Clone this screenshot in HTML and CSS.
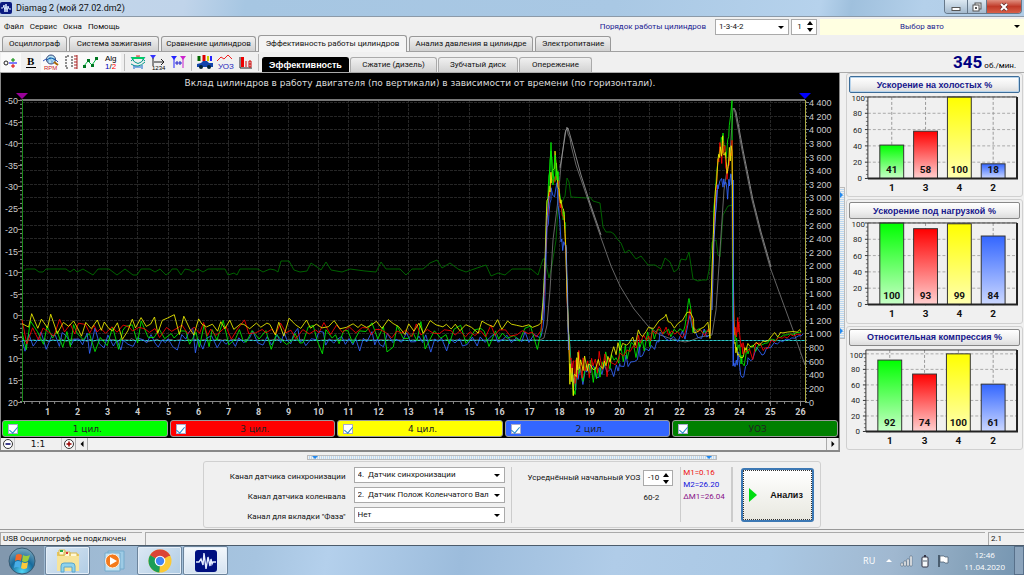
FILE: index.html
```html
<!DOCTYPE html>
<html lang="ru">
<head>
<meta charset="utf-8">
<title>Diamag 2 (мой 27.02.dm2)</title>
<link rel="stylesheet" href="styles.css">
</head>
<body>
<header class="titlebar">
  <svg class="app-icon" viewBox="0 0 12 12"><rect width="12" height="12" rx="2" fill="#0a1a80"/><path d="M1 6h2l1-3 1 7 1-8 1 8 1-6 1 3h2" fill="none" stroke="#d8e8ff"/></svg>
  <span class="title">Diamag 2 (мой 27.02.dm2)</span>
  <div class="win-buttons">
    <button class="win-btn" aria-label="Свернуть"><svg viewBox="0 0 12 10"><rect x="2" y="5.500" width="8" height="3" fill="#fff" stroke="#555"/></svg></button>
    <button class="win-btn" aria-label="Развернуть"><svg viewBox="0 0 12 10"><rect x="4" y="1" width="6" height="6" fill="#eee" stroke="#555"/><rect x="2" y="3" width="6" height="6" fill="#fff" stroke="#555"/><rect x="4" y="5" width="2" height="2" fill="#555"/></svg></button>
    <button class="win-btn close" aria-label="Закрыть"><svg viewBox="0 0 12 10"><path d="M3 2l6 6M9 2l-6 6" stroke="#643030" stroke-width="3.500"/><path d="M3 2l6 6M9 2l-6 6" stroke="#fff" stroke-width="2"/></svg></button>
  </div>
</header>

<div class="menubar">
  <nav class="menu"><a href="#">Файл</a><a href="#">Сервис</a><a href="#">Окна</a><a href="#">Помощь</a></nav>
  <label class="order-label" for="order">Порядок работы цилиндров</label>
  <span class="select order"><select id="order"><option>1-3-4-2</option></select></span>
  <span class="spin small"><input type="text" value="1" aria-label="Номер цилиндра"><span class="arrows"><button aria-label="Больше"></button><button class="down" aria-label="Меньше"></button></span></span>
  <button class="car">Выбор авто<i class="caret"></i></button>
</div>

<nav class="tabs">
  <button class="tab t1">Осциллограф</button><button class="tab t2">Система зажигания</button><button class="tab t3">Сравнение цилиндров</button><button class="tab t4 active">Эффективность работы цилиндров</button><button class="tab t5">Анализ давления в цилиндре</button><button class="tab t6">Электропитание</button>
</nav>

<div class="toolbar">
  <div class="tools">
    <button class="tool on" aria-label="Смещение"><svg viewBox="0 0 20 18"><circle cx="5" cy="10" r="2" fill="none" stroke="#222"/><path d="M8 10h8" stroke="#00f"/><path d="M12 5v4M10 7h4" stroke="#080"/><path d="M10 13h4M12 11v4" stroke="#d00"/></svg></button>
    <button class="tool" aria-label="Жирные линии"><svg viewBox="0 0 20 18"><text x="6" y="12" class="bold-glyph">B</text><path d="M5 14.500h10" stroke="#000"/></svg></button>
    <button class="tool on" aria-label="Обороты"><svg viewBox="0 0 20 18"><path d="M2 8l3-2 2 3 2-5 2 6 2-5 4 4" fill="none" stroke="#35b"/><circle cx="10" cy="6.500" r="4.500" fill="#9cdaf0" fill-opacity=".7" stroke="#347"/><path d="M6 7q4-4 8 0" fill="none" stroke="#05a"/><path d="M13 9l4 3" stroke="#a60" stroke-width="2"/><text x="3" y="17" class="nano red">RPM</text></svg></button>
    <button class="tool on" aria-label="Шкала"><svg viewBox="0 0 20 18"><path d="M8 3H5v12h3M11 3v12" fill="none" stroke="#222" stroke-dasharray="2 1"/><path d="M16 2v14M13 3h3M13 6h3M13 9h3M13 12h3M13 15h3" stroke="#a22"/></svg></button>
    <button class="tool on" aria-label="Точки"><svg viewBox="0 0 20 18"><path d="M3 13l4-5 4 4 5-7" fill="none" stroke="#0b4"/><path d="M2 12h3v3H2zM6 6h3v3H6zM10 11h3v3h-3zM14 4h3v3h-3z" fill="#072"/></svg></button>
    <button class="tool on" aria-label="Алгоритм"><svg viewBox="0 0 20 18"><text x="4" y="8" class="micro">Alg</text><text x="4" y="16" class="micro"><tspan fill="#00b">1</tspan>/<tspan fill="#f00">2</tspan></text></svg></button>
    <i class="sep"></i>
    <button class="tool" aria-label="Фаза"><svg viewBox="0 0 20 18"><path d="M3 4q7 13 14 0M3 8q7-8 14 0M3 11q7 5 14-2" fill="none" stroke="#098"/><path d="M4 5h12" stroke="#0c6" stroke-width="2"/><path d="M6 12v4M14 12v4M7 14h6" stroke="#16c"/><path d="M8 3h4" stroke="#e22"/></svg></button>
    <button class="tool" aria-label="Порядок"><svg viewBox="0 0 20 18"><path d="M2 2h6l-3 4z" fill="#33f"/><path d="M5 5v8M6 9h10M13 6l3 3-3 3" fill="none" stroke="#222"/><text x="4" y="17" class="nano">1234</text></svg></button>
    <button class="tool" aria-label="Маркеры"><svg viewBox="0 0 20 18"><path d="M3 3h6L6 7z" fill="#22f"/><path d="M12 3h6l-3 4z" fill="#c2c"/><path d="M6 6v9" stroke="#22f"/><path d="M15 6v9" stroke="#c2c"/><path d="M7 10h7M9 8v4M12 8v4" stroke="#22c"/></svg></button>
    <i class="sep"></i>
    <button class="tool" aria-label="Авто"><svg viewBox="0 0 20 18"><path d="M4 3v5" stroke="#060" stroke-width="3"/><path d="M9 2v6" stroke="#d00" stroke-width="3"/><path d="M13 3v5" stroke="#cc0" stroke-width="2"/><path d="M16 3v5" stroke="#22f" stroke-width="2"/><path d="M2 11l4-1 2-2h4l2 2h4v4H2z" fill="#14a"/><circle cx="6" cy="14" r="2" fill="#023"/><circle cx="14" cy="14" r="2" fill="#023"/></svg></button>
    <button class="tool" aria-label="УОЗ"><svg viewBox="0 0 20 18"><path d="M2 8l4-4 3 2 4-4 4 4" fill="none" stroke="#e22"/><text x="3" y="16" class="micro blue">УОЗ</text></svg></button>
    <button class="tool" aria-label="Компрессия"><svg viewBox="0 0 20 18"><path d="M5 4v11h12" fill="none" stroke="#222"/><path d="M7.500 4v10" stroke="#e00" stroke-width="3"/><path d="M11 8v6M14 8h2v6h-2zM14 11h2" fill="none" stroke="#c00"/></svg></button>
    <i class="sep"></i>
  </div>
  <nav class="subtabs">
    <button class="sub active s1">Эффективность</button><button class="sub s1">Сжатие (дизель)</button><button class="sub s2">Зубчатый диск</button><button class="sub s3">Опережение</button>
  </nav>
  <div class="rpm"><b>345</b><span>об./мин.</span></div>
</div>

<main class="main">
  <section class="scope">
    <div class="screen">
      <h1 class="chart-title">Вклад цилиндров в работу двигателя (по вертикали) в зависимости от времени (по горизонтали).</h1>
      <svg id="scope" class="plot" viewBox="1 92 838 327"></svg>
      <div class="legend">
        <label class="leg green"><input type="checkbox" checked><span>1 цил.</span></label>
        <label class="leg red-bg"><input type="checkbox" checked><span>3 цил.</span></label>
        <label class="leg yellow"><input type="checkbox" checked><span>4 цил.</span></label>
        <label class="leg blue-bg"><input type="checkbox" checked><span>2 цил.</span></label>
        <label class="leg dark"><input type="checkbox" checked><span>УОЗ</span></label>
      </div>
    </div>
    <div class="scale">
      <button class="zoom" aria-label="Уменьшить"><svg viewBox="0 0 12 12"><circle cx="6" cy="6" r="4.500" fill="#fff" stroke="#333"/><path d="M3.500 6h5" stroke="#006" stroke-width="1.500"/></svg></button>
      <span class="ratio">1:1</span>
      <button class="zoom" aria-label="Увеличить"><svg viewBox="0 0 12 12"><circle cx="6" cy="6" r="4.500" fill="#fff" stroke="#333"/><path d="M3.500 6h5M6 3.500v5" stroke="#900" stroke-width="1.500"/></svg></button>
      <button class="zoom edge" aria-label="Влево"><svg viewBox="0 0 12 12"><path d="M7.500 3v6l-3-3z"/></svg></button>
      <i class="track"></i>
      <button class="zoom edge" aria-label="Вправо"><svg viewBox="0 0 12 12"><path d="M4.500 3v6l3-3z"/></svg></button>
    </div>
  </section>
  <div class="vsplit"><div class="grip"><i></i><i></i></div></div>
  <aside class="side">
    <section class="card"><button class="card-title focus">Ускорение на холостых %</button><svg class="bars" viewBox="0 0 172 102" data-values="41,58,100,18" data-start="44" data-max="100"></svg></section>
    <section class="card"><button class="card-title">Ускорение под нагрузкой %</button><svg class="bars" viewBox="0 0 172 102" data-values="100,93,99,84" data-start="44" data-max="100"></svg></section>
    <section class="card"><button class="card-title">Относительная компрессия %</button><svg class="bars" viewBox="0 0 172 102" data-values="92,74,100,61" data-start="42" data-max="105"></svg></section>
  </aside>
</main>

<div class="hsplit"><div class="hgrip"><i></i><i></i></div></div>
<section class="bottom">
  <form class="panel">
    <div class="channels">
      <label for="c1">Канал датчика синхронизации</label><span class="select"><select id="c1"><option>4.&nbsp; Датчик синхронизации</option></select></span>
      <label for="c2">Канал датчика коленвала</label><span class="select"><select id="c2"><option>2.&nbsp; Датчик Полож Коленчатого Вал</option></select></span>
      <label for="c3">Канал для вкладки "Фаза"</label><span class="select"><select id="c3"><option>Нет</option></select></span>
    </div>
    <div class="advance">
      <label for="uoz">Усреднённый начальный УОЗ</label>
      <span class="spin"><input id="uoz" type="text" value="-10"><span class="arrows"><button type="button" aria-label="Больше"></button><button type="button" class="down" aria-label="Меньше"></button></span></span>
      <span class="disk">60-2</span>
    </div>
    <div class="markers"><span class="m-red">M1=0.16</span><span class="m-blue">M2=26.20</span><span class="m-purple">ΔM1=26.04</span></div>
    <button type="button" class="analyze"><svg viewBox="0 0 8 14"><path d="M0 0v14l8-7z" fill="#0d1"/></svg><span>Анализ</span></button>
  </form>
</section>

<footer class="status"><span class="usb">USB Осциллограф не подключен</span><span class="fill"></span><span class="ver">2.1</span></footer>

<div class="taskbar">
  <button class="start" aria-label="Пуск"><svg viewBox="0 0 28 28"><defs><radialGradient id="orb" cx=".5" cy=".9" r=".9"><stop offset="0" stop-color="#4fd5f5"/><stop offset=".5" stop-color="#176a9c"/><stop offset="1" stop-color="#7eaabf"/></radialGradient></defs><circle cx="14" cy="14" r="13" fill="url(#orb)" stroke="#375a72"/><path d="M8 8q3-2 6 0l-1 6q-3-2-6 0z" fill="#f06a28"/><path d="M15 8q3 2 7 0l-2 6q-3 2-6 0z" fill="#9ccc3c"/><path d="M7 15q3-2 6 0l-1 6q-3-2-6 0z" fill="#48aee8"/><path d="M14 15q3 2 6 0l-1 6q-3 2-6 0z" fill="#fcc93a"/></svg></button>
  <button class="task open" aria-label="Проводник"><svg viewBox="0 0 28 26"><path d="M3 4h6l2 2h14v17H3z" fill="#e9c65c"/><path d="M5 2h6v5H5zM10 4h6v5h-6zM16 5h7v4h-7z" fill="#fff8d8" stroke="#d8b850"/><path d="M6 3h3" stroke="#2a4" stroke-width="2"/><path d="M12 5h2" stroke="#d33" stroke-width="2"/><path d="M3 8h22v15H3z" fill="#f7e49a"/><path d="M7 24v-6q0-3 3-3h8q3 0 3 3v6h-3v-5h-8v5z" fill="#8fd3ee" stroke="#5aa6cc"/></svg></button>
  <button class="task" aria-label="Проигрыватель"><svg viewBox="0 0 28 26"><path d="M8 3h16v18H8z" fill="#9dcbe5" stroke="#74aacb"/><path d="M5 5h15v18H5z" fill="#c2e2f2" stroke="#74aacb"/><circle cx="12.500" cy="13" r="7" fill="#f47a1c" stroke="#fff0e0"/><path d="M10 9v8l7-4z" fill="#fff"/></svg></button>
  <button class="task open" aria-label="Chrome"><svg viewBox="0 0 28 26"><circle cx="14" cy="13" r="11.500" fill="#fcc934"/><path d="M14 13L4 7.300A11.500 11.500 0 0 1 24 7.300z" fill="#db4437"/><path d="M14 7.500h10.100" stroke="#db4437" stroke-width="1"/><path d="M14 13L4 7.300A11.500 11.500 0 0 0 13.500 24.500z" fill="#1b9e57"/><path d="M9 16l-5-8.700 4.500 3z" fill="#1b9e57"/><path d="M18.500 16l-5 8.500 1-7z" fill="#fcc934"/><circle cx="14" cy="13" r="5.300" fill="#fff"/><circle cx="14" cy="13" r="4.200" fill="#4285f4"/></svg></button>
  <button class="task open current" aria-label="Diamag"><svg viewBox="0 0 28 26"><rect x="3" y="2" width="22" height="22" rx="3" fill="#001080"/><path d="M4 14h3l2-3 2 6 1-12 2 16 2-12 2 9 1-7 1 5 1-2h3" fill="none" stroke="#e4edff" stroke-width="1.400"/></svg></button>
  <div class="tray">
    <span class="lang">RU</span>
    <svg class="ti" viewBox="0 0 14 14"><path d="M4 8h6L7 5z" fill="#fff"/></svg>
    <svg class="ti" viewBox="0 0 14 14"><path d="M1 12h2V9H1zM4 12h2V7H4zM7 12h2V5H7zM10 12h2V2h-2z" fill="#fff" stroke="#456" stroke-width=".5"/></svg>
    <svg class="ti" viewBox="0 0 14 14"><rect x="4" y="3" width="6" height="10" rx="1" fill="#f4f8fa" stroke="#334"/><path d="M6 1h2v2H6z" fill="#334"/><path d="M5 7h4" stroke="#567"/></svg>
    <svg class="ti" viewBox="0 0 14 14"><path d="M3 1v12" stroke="#345" stroke-width="1.500"/><path d="M4 2h4l1 1h3v6H9L8 8H4z" fill="#fff" stroke="#456" stroke-width=".7"/></svg>
    <div class="clock"><span>12:46</span><span>11.04.2020</span></div>
  </div>
  <button class="desktop" aria-label="Рабочий стол"></button>
</div>
<script src="charts.js"></script>
</body>
</html>
```

FILE: styles.css
```css
* { box-sizing: border-box; }
body { margin: 0; min-height: 100vh; display: flex; flex-direction: column; background: #f0f0f0; color: #111; font: 8px/12px Roboto, "Liberation Sans", sans-serif; overflow: hidden; }
button, input, select { font: inherit; color: inherit; margin: 0; padding: 0; border: 0; background: none; min-width: 0; }
a { color: inherit; text-decoration: none; }
svg { display: block; flex: none; }

.titlebar { height: 17px; display: flex; align-items: center; gap: 4px; border-bottom: 1px solid #8c9aa8; background: linear-gradient(100deg, #c4d6ea 0, #c0d4ea 18%, #a6c6e2 24%, #a9c8e4 60%, #b6d2ec 80%, #9fc0dd 83%, #b4d0ea 90%, #b0cce6 100%); }
.app-icon { width: 12px; height: 12px; }
.title { flex: 1; font-size: 9px; }
.win-buttons { display: flex; align-self: flex-start; height: 14px; margin-right: 2px; border: 1px solid #66788a; border-top: 0; border-radius: 0 0 4px 4px; overflow: hidden; }
.win-btn { width: 19px; display: flex; align-items: center; justify-content: center; border-right: 1px solid #66788a; background: linear-gradient(#dce8f2, #a4bace); }
.win-btn:nth-child(1) { width: 23px; }
.win-btn svg { width: 12px; height: 10px; }
.win-btn.close { width: 34px; border: 0; background: linear-gradient(#e09080, #c03a28 50%, #d86048); }

.menubar { height: 19px; display: flex; align-items: center; padding-left: 4px; }
.menu { display: flex; gap: 6px; flex: 1; }
.order-label { color: #1a1a90; margin-right: 9px; }
.select { position: relative; display: block; height: 16px; border: 1px solid #aaa; background: #fff; }
.select select { appearance: none; display: block; width: 100%; height: 14px; padding: 0 12px 0 3px; outline: 0; }
.select::after, .caret { content: ""; position: absolute; right: 4px; top: 6px; border: 3px solid transparent; border-top-color: #000; border-bottom: 0; pointer-events: none; }
.order { width: 74px; margin-right: 2px; }
.spin { display: flex; width: 30px; height: 16px; padding-right: 3px; align-items: center; border: 1px solid #aaa; background: #fff; }
.spin input { flex: 1; width: 10px; text-align: center; outline: 0; }
.spin.small { width: 26px; margin-right: 3px; }
.arrows { display: flex; flex-direction: column; gap: 3px; }
.arrows button { width: 0; height: 0; border: 3px solid transparent; border-top: 0; border-bottom: 4px solid #000; }
.arrows button.down { border-bottom: 0; border-top: 4px solid #000; }
.car { position: relative; width: 20%; height: 16px; background: #ffffe1; color: #1a1a90; }

.tabs { display: flex; align-items: flex-end; gap: 2px; height: 16px; padding-left: 2px; border-bottom: 1px solid #a0a0a0; }
.tab { height: 15px; border: 1px solid #999; border-bottom: 0; border-radius: 3px 3px 0 0; background: linear-gradient(#f2f2f2, #d0d0d0); white-space: nowrap; }
.t1 { width: 65px; } .t2 { width: 90px; } .t3 { width: 95px; } .t4 { width: 149px; } .t5 { width: 124px; } .t6 { width: 76px; }
.tab.active { height: 17px; margin-bottom: -1px; background: #f4f4f4; }

.toolbar { height: 21px; display: flex; align-items: flex-end; border-bottom: 1px solid #aaa; }
.tools { display: flex; align-items: center; height: 20px; padding-left: 1px; }
.tool { width: 20px; height: 19px; }
.tool.on { background: #fafafa; }
.tool svg { width: 20px; height: 18px; }
.sep { width: 1px; height: 17px; margin: 0 3px; background: #bbb; }
.bold-glyph { font: bold 11px "Liberation Serif", serif; }
.micro { font: 8px "Liberation Sans", sans-serif; }
.nano { font: 6px "Liberation Sans", sans-serif; }
.red { fill: #c22; } .blue { fill: #22b; }
.subtabs { display: flex; flex: 1; gap: 1px; }
.sub { height: 15px; border: 1px solid #aaa; border-bottom: 0; border-radius: 3px 3px 0 0; background: linear-gradient(#f0f0f0, #d2d2d2); }
.s1 { width: 87px; } .s2 { width: 80px; } .s3 { width: 73px; }
.sub.active { background: #000; color: #fff; border-color: #000; font-family: "Liberation Sans", sans-serif; font-size: 9px; font-weight: bold; }
.rpm { display: flex; align-items: baseline; gap: 2px; padding-right: 8px; color: #000; }
.rpm b { color: #000080; font-size: 17px; line-height: 19px; }

.main { display: flex; align-items: flex-start; padding: 0 1px 0 0; }
.scope { flex: 1; min-width: 0; border: 1px solid #888; border-top: 0; }
.screen { background: #000; }
.chart-title { margin: 0; height: 19px; padding-top: 4px; color: #ddd; font: 9px/12px "DejaVu Sans", sans-serif; text-align: center; white-space: nowrap; }
.plot { width: 100%; height: auto; }
.plot .grid { stroke: #262626; stroke-dasharray: 3 1; }
.plot .axis { stroke: #888; }
.plot text { fill: #ccc; font: 9px "Liberation Sans", sans-serif; }
.plot .time { font-family: Roboto, sans-serif; font-weight: bold; text-anchor: middle; }
.plot .left { text-anchor: end; }
.trace { fill: none; stroke-width: 1; stroke-linejoin: round; opacity: .85; }
.legend { display: flex; gap: 2px; padding: 1px; }
.leg { flex: 1; height: 17px; display: flex; align-items: center; padding-left: 5px; border: 1px solid #999; border-radius: 3px; font-family: "DejaVu Sans", sans-serif; font-size: 9px; color: #222; }
.leg span { flex: 1; text-align: center; padding-right: 10px; }
.leg input { appearance: none; width: 10px; height: 10px; margin: 0; background: #fff; border: 1px solid #aac; display: grid; place-items: center; }
.leg input::after { content: ""; width: 4px; height: 7px; border: solid #28c; border-width: 0 1px 1px 0; transform: rotate(40deg); }
.green { background: #00ff00; } .red-bg { background: #ff0000; } .yellow { background: #ffff00; } .blue-bg { background: #3366ff; } .dark { background: #008000; }
.scale { display: flex; height: 13px; align-items: stretch; border-bottom: 1px solid #888; }
.zoom { width: 13px; display: flex; justify-content: center; }
.zoom svg { width: 12px; height: 12px; }
.zoom.edge { border: 1px solid #aaa; border-width: 0 1px; }
.ratio { width: 48px; text-align: center; border: 1px solid #ccc; border-width: 0 1px; font-family: "DejaVu Sans", sans-serif; font-size: 9px; }
.track { flex: 1; background: #f2f2f2; }
.vsplit { width: 6px; align-self: stretch; display: flex; align-items: center; }
.grip { width: 5px; height: 152px; display: flex; flex-direction: column; justify-content: space-between; padding: 4px 0; border: 1px solid #bbb; border-left: 0; background: repeating-linear-gradient(#f0f0f0 0 1px, #bcd8f0 1px 2px); }
.grip i { border: 3px solid transparent; border-left: 3px solid #28e; border-right: 0; width: 0; }
.side { width: 177px; display: flex; flex-direction: column; gap: 2px; }
.card { border: 1px solid #d0d0d0; border-radius: 3px; padding: 2px; }
.card-title { display: block; width: 100%; height: 17px; border: 1px solid #888; border-radius: 2px; background: linear-gradient(#fff, #eee 60%, #ddd); color: #16168c; font-family: "Liberation Sans", sans-serif; font-size: 9px; font-weight: bold; }
.card-title.focus { border-color: #3c6c98; box-shadow: inset 0 0 0 1px #b8d4ec; }
.bars { width: 100%; height: auto; overflow: visible; }
.bars text { font: 9px Roboto, sans-serif; fill: #222; }
.bars .strong { font-weight: bold; font-size: 10px; text-anchor: middle; fill: #111; }
.bars .scale-num { text-anchor: end; font-size: 8px; }

.hsplit { padding: 3px 0 0; display: flex; justify-content: center; }
.hgrip { width: 40%; height: 5px; display: flex; justify-content: space-between; padding: 0 4px; border: 1px solid #bbb; background: repeating-linear-gradient(90deg, #f0f0f0 0 1px, #bcd8f0 1px 2px); }
.hgrip i { height: 0; border: 3px solid transparent; border-top-color: #28e; border-bottom: 0; }
.bottom { flex: 1; display: flex; justify-content: center; align-items: flex-start; padding-top: 1px; border-bottom: 1px solid #999; }
.panel { display: flex; align-items: center; height: 67px; padding: 0 6px 0 26px; border: 1px solid #d0d0d0; border-radius: 3px; }
.channels { display: grid; grid-template-columns: auto 151px; gap: 4px 8px; align-items: center; padding-right: 6px; border-right: 1px solid #ccc; }
.channels label { text-align: right; padding-top: 4px; }
.advance { display: grid; grid-template-columns: auto auto; gap: 6px 3px; align-items: center; align-self: flex-start; margin-top: 8px; padding: 0 7px 0 16px; }
.disk { grid-column: 1 / 3; justify-self: end; margin-right: 14px; }
.markers { display: flex; flex-direction: column; align-self: flex-start; width: 53px; height: 55px; margin: 5px 8px 0 0; padding-left: 2px; border: 1px solid #ccc; border-width: 0 2px 0 1px; white-space: nowrap; }
.m-red { color: #e11; } .m-blue { color: #11d; } .m-purple { color: #818; }
.analyze { width: 73px; height: 54px; display: flex; align-items: center; gap: 13px; padding-left: 6px; border: 2px solid #3c78b4; border-radius: 3px; outline: 1px dotted #333; outline-offset: -3px; background: linear-gradient(#fff, #e8e8e0); font-family: "Liberation Sans", sans-serif; font-size: 9px; font-weight: bold; }
.analyze svg { width: 8px; height: 14px; }

.status { display: flex; gap: 3px; height: 15px; padding-top: 2px; background: #f0f0f0; }
.status span { border: 1px solid #aaa; border-width: 1px 0 0 1px; padding-left: 2px; line-height: 11px; white-space: nowrap; }
.usb { width: 142px; } .fill { flex: 1; } .ver { width: 36px; }
.taskbar { display: flex; height: 30px; border-top: 1px solid #4c5c6c; background: linear-gradient(100deg, #9ab4cc, #a6c4e0 25%, #b4d0ec 32%, #9cbcdc 45%, #b0cce8 60%, #aac8e4 75%, #a0b8d0 87%, #88a4bc 94%, #7494b0); }
.start { width: 44px; display: flex; justify-content: center; align-items: center; background: #8298ae; }
.start svg { width: 28px; height: 28px; }
.task { width: 45px; margin-left: 1px; display: flex; align-items: center; justify-content: center; border: 1px solid transparent; border-radius: 2px; }
.task.open { border-color: #6c849c; background: linear-gradient(135deg, #dce8f4, #b0cce4); box-shadow: inset 0 0 0 1px #e4eef8; }
.task.current { background: linear-gradient(#f4f8fc, #d4e2f0); }
.task svg { width: 28px; height: 26px; }
.tray { flex: 1; display: flex; align-items: center; justify-content: flex-end; gap: 4px; color: #fff; font-family: "Open Sans", "Noto Sans", sans-serif; }
.lang { margin-right: 3px; font-size: 9px; }
.ti { width: 14px; height: 14px; }
.clock { display: flex; flex-direction: column; align-items: center; margin: 0 9px 0 10px; }
.desktop { width: 10px; border: 1px solid #58708a; background: #8ca4bc; }
```

FILE: charts.js
```js
const NS = 'http://www.w3.org/2000/svg';
function add(parent, name, attrs, text) {
  const el = document.createElementNS(NS, name);
  for (const key in attrs) el.setAttribute(key, attrs[key]);
  if (text !== undefined) el.textContent = text;
  parent.appendChild(el);
  return el;
}
function random(seed) {
  return () => (seed = (seed * 16807) % 2147483647) / 2147483647;
}

const scope = document.getElementById('scope');
const LEFT = 22, RIGHT = 805, TOP = 100, BOTTOM = 402;
const timeX = t => 17 + 30.1 * t;
const valueY = v => 315.4 + 4.307 * v;
const rpmY = r => 401.5 - r * 0.06805;
const line = (x1, y1, x2, y2, cls) => add(scope, 'line', { x1, y1, x2, y2, class: cls });

for (let t = 1; t <= 26; t++) {
  const x = Math.round(timeX(t)) + 0.5;
  line(x, TOP, x, BOTTOM, 'grid');
  line(x, BOTTOM, x, BOTTOM + 4, 'axis');
  add(scope, 'text', { x, y: 415, class: 'time' }, t);
}
for (let t = 0.25; t < 26; t += 0.25) line(timeX(t), BOTTOM, timeX(t), BOTTOM + 2, 'axis');
for (let r = 0; r <= 4400; r += 200) {
  const y = Math.round(rpmY(r)) + 0.5;
  if (r) line(LEFT, y, RIGHT, y, 'grid');
  line(RIGHT, y, RIGHT + 4, y, 'axis');
  const label = r < 1000 ? String(r) : Math.floor(r / 1000) + ' ' + String(r % 1000).padStart(3, '0');
  add(scope, 'text', { x: 809, y: y + 3 }, label);
}
for (let r = 0; r <= 4400; r += 50) line(RIGHT, rpmY(r), RIGHT + 2, rpmY(r), 'axis');
for (let v = -50; v <= 20; v += 5) {
  const y = Math.round(valueY(v)) + 0.5;
  line(LEFT - 4, y, LEFT, y, 'axis');
  add(scope, 'text', { x: 18, y: y + 3, class: 'left' }, v);
}
for (let v = -50; v <= 20; v++) line(LEFT - 2, valueY(v), LEFT, valueY(v), 'axis');
add(scope, 'line', { x1: LEFT, y1: 100, x2: RIGHT, y2: 100, stroke: '#777', 'stroke-width': 2 });
line(LEFT, 401.5, RIGHT, 401.5, 'axis');
add(scope, 'line', { x1: 22.5, y1: TOP, x2: 22.5, y2: BOTTOM, stroke: '#1a8a1a' });
add(scope, 'line', { x1: 805.5, y1: TOP, x2: 805.5, y2: BOTTOM, stroke: '#aaaa44' });
add(scope, 'path', { d: 'M16 93h12l-6 6z', fill: '#909' });
add(scope, 'path', { d: 'M799 93h12l-6 6z', fill: '#00f' });

function trace(points, color) {
  add(scope, 'polyline', { class: 'trace', stroke: color, points: points.map(p => p.map(n => n.toFixed(1)).join(',')).join(' ') });
}
function pairs(text) {
  return text.trim().split(/\s+/).map(p => p.split(',').map(Number));
}
/* Each key is x, y, noise amplitude, step; values between keys are interpolated. */
function noisy(keys, seed) {
  const rnd = random(seed), out = [];
  let side = 1;
  for (let i = 0; i < keys.length - 1; i++) {
    const [x0, y0, a0, step] = keys[i], [x1, y1, a1] = keys[i + 1];
    for (let x = x0; x < x1; x += step * (0.6 + 0.8 * rnd())) {
      const k = (x - x0) / (x1 - x0);
      const amp = a0 + (a1 - a0) * k;
      if (rnd() < 0.8) side = -side;
      out.push([x, Math.min(401, y0 + (y1 - y0) * k + side * amp * (0.1 + 0.9 * rnd() * rnd() * 1.4))]);
    }
  }
  return out;
}

trace(pairs(`22,272 26,269 35,269 39,272 43,272 46,269 66,269 70,272 74,269 77,272 83,269 93,275 98,269 109,269 117,275
 125,269 133,275 137,275 141,269 150,269 155,272 160,269 166,275 170,272 172,269 177,269 181,275 185,269 190,270 193,272
 198,269 203,272 208,269 225,269 228,275 234,273 237,275 240,269 258,269 263,272 270,269 275,270 278,272 281,261 289,261
 294,270 300,272 307,271 311,263 317,267 321,270 326,262 331,270 342,272 350,269 365,271 376,272 381,262 386,269 400,269
 406,275 412,269 423,269 430,263 437,260 442,268 450,263 458,269 466,272 474,269 486,265 491,276 498,273 505,275 512,269
 531,269 538,275 543,259 545,259 549,278 552,265 556,240 558,208 562,202 565,196 567,178 569,182 571,197 586,198 590,197
 593,201 600,203 603,227 606,232 611,232 614,234 618,240 621,243 625,253 629,250 636,259 641,256 648,265 655,265 661,269
 665,258 670,262 674,272 678,269 681,259 686,260 689,252 693,279 698,281 702,280 707,280 709,270 712,242 716,240 718,255
 720,257 723,215 728,206 733,205`), '#007200');

const engine = noisy([[22, 340, 2, 3], [540, 340, 0, 3], [541, 340, 0, 9]], 21);
const rev = pairs(`544,338 547,325 550,290 553,240 558,200 561,165 565,133 567,127 568,134 570,138 571,145 576,165 588,200
 600,235 611,266 620,286 634,309 648,326 660,335 672,339 685,342 690,341 700,337 712,335 716,310 720,250 724,190 727,170
 730,155 733,108 735,112 742,150 752,200 760,232 770,267 782,300 793,330 798,345 805,365`);
trace(engine.concat(rev), '#777');
add(scope, 'polyline', { class: 'trace', stroke: '#999', points: '560,168 566,130 568,128 572,142 581,175 589,200 601,235' });
add(scope, 'polyline', { class: 'trace', stroke: '#999', points: '734,108 736,112 743,150 753,200 761,232 771,267' });
add(scope, 'line', { x1: LEFT, y1: 340.5, x2: RIGHT, y2: 340.5, stroke: '#188' });
add(scope, 'line', { x1: LEFT, y1: 340.5, x2: RIGHT, y2: 340.5, stroke: '#3cc', 'stroke-dasharray': '2 2' });

trace(noisy([[22, 342, 12, 4], [541, 340, 9, 2], [544, 320, 5, 1], [547, 230, 8, 1], [551, 195, 8, 1.5], [557, 185, 10, 1.5],
  [561, 240, 9, 1], [566, 245, 10, 1], [568, 330, 5, 1], [570, 350, 12, 1], [574, 385, 15, 1], [578, 370, 12, 2], [600, 372, 9, 2],
  [620, 368, 9, 3], [640, 355, 9, 3], [660, 340, 7, 4], [685, 338, 8, 3], [690, 315, 3, 3], [694, 332, 6, 3], [710, 335, 5, 1],
  [714, 230, 5, 1], [718, 187, 8, 1.5], [723, 177, 9, 1], [727, 192, 9, 1], [732, 178, 8, 1], [733, 365, 8, 1], [738, 360, 12, 2],
  [742, 380, 16, 2], [748, 360, 9, 3], [762, 354, 8, 3], [775, 343, 3, 3], [803, 335, 1, 4], [804, 335, 0, 4]], 419), '#36f');
trace(noisy([[22, 335, 19, 5], [541, 337, 12, 2], [544, 290, 7, 1], [547, 205, 7, 1], [551, 151, 16, 1], [553, 181, 14, 1.5],
  [558, 176, 12, 1.5], [561, 205, 10, 1], [565, 225, 10, 1], [568, 320, 6, 1], [571, 370, 16, 1], [574, 398, 10, 1], [577, 370, 14, 2],
  [600, 370, 11, 2], [620, 350, 12, 3], [640, 343, 12, 3], [660, 332, 9, 4], [685, 330, 9, 3], [689, 298, 2, 3], [693, 329, 9, 3],
  [710, 333, 6, 1], [714, 210, 6, 1], [718, 160, 11, 1], [723, 137, 12, 1], [726, 157, 12, 1], [732, 101, 1, 1], [733, 320, 8, 1],
  [736, 340, 10, 1], [742, 367, 15, 2], [748, 353, 8, 3], [765, 344, 5, 3], [780, 336, 2, 3], [801, 332, 1, 4], [802, 332, 0, 4]], 77), '#0e0');
trace(noisy([[22, 329, 12, 5], [541, 333, 6, 2], [544, 300, 8, 1], [547, 220, 7, 1], [551, 182, 9, 1.5], [557, 178, 9, 1.5],
  [561, 207, 10, 1], [565, 230, 10, 1], [568, 325, 6, 1], [571, 370, 18, 1], [576, 376, 20, 1.5], [583, 365, 15, 2], [600, 363, 14, 2],
  [620, 357, 10, 3], [640, 342, 9, 3], [660, 331, 6, 4], [685, 334, 4, 3], [690, 310, 3, 3], [694, 329, 7, 3], [710, 333, 6, 1],
  [714, 225, 6, 1], [718, 160, 10, 1], [723, 150, 11, 1], [727, 172, 14, 1], [732, 150, 9, 1], [734, 330, 17, 1], [738, 330, 20, 1],
  [743, 352, 10, 3], [765, 347, 8, 3], [780, 338, 3, 3], [801, 334, 1, 4], [802, 334, 0, 4]], 1041), '#f00');
trace(noisy([[22, 325, 13, 5], [541, 326, 6, 2], [544, 285, 6, 1], [547, 205, 7, 1], [551, 177, 10, 1.5], [555, 163, 12, 1.5],
  [558, 185, 12, 1], [561, 205, 10, 1], [565, 223, 10, 1], [568, 320, 6, 1], [570, 370, 14, 1], [574, 385, 18, 1], [578, 365, 12, 2],
  [600, 367, 12, 2], [620, 347, 11, 3], [640, 336, 9, 3], [650, 327, 5, 5], [666, 318, 5, 3], [675, 328, 4, 4], [690, 311, 3, 3],
  [694, 325, 7, 3], [710, 331, 6, 1], [714, 215, 6, 1], [718, 157, 11, 1], [723, 149, 12, 1], [727, 162, 14, 1], [732, 147, 12, 1],
  [734, 340, 12, 1], [740, 360, 12, 2], [746, 349, 7, 3], [765, 341, 5, 3], [780, 333, 2, 4], [801, 331, 1, 4], [802, 331, 0, 4]], 5577), '#ee0');
add(scope, 'polyline', { class: 'trace', stroke: '#0e0', points: '549,190 550,160 551,151 552,160 553,185 554,168 555,155 557,180 558,172' });
add(scope, 'polyline', { class: 'trace', stroke: '#36f', points: '733.5,180 733.5,365' });
add(scope, 'polyline', { class: 'trace', stroke: '#68f', points: '542.500,320 545,270 547,220 549,196' });
add(scope, 'polyline', { class: 'trace', stroke: '#68f', points: '566,245 567.500,290 568.500,350' });
add(scope, 'polyline', { class: 'trace', stroke: '#68f', points: '712,310 714,240 717,190' });

const colors = [['#00ff00', '#c8ffc8'], ['#ff0000', '#ffd0d0'], ['#ffff00', '#ffffb0'], ['#3366ff', '#ccd8ff']];
document.querySelectorAll('.bars').forEach((svg, index) => {
  const values = svg.dataset.values.split(',').map(Number);
  const max = Number(svg.dataset.max), start = Number(svg.dataset.start);
  const x0 = start - 25, x1 = 169, y0 = 4, y1 = 86;
  const y = v => y1 - (v / max) * (y1 - y0);
  const gap = (146 - start) / 3;
  for (let v = 0; v <= 100; v += 20) {
    if (v) add(svg, 'line', { x1: x0, y1: y(v), x2: x1, y2: y(v), stroke: '#aaa', 'stroke-dasharray': '3 2' });
    add(svg, 'line', { x1: x0 - 3, y1: y(v), x2: x0, y2: y(v), stroke: '#333' });
    if (v < 100) for (let k = 5; k < 20; k += 5) add(svg, 'line', { x1: x0 - 2, y1: y(v + k), x2: x0, y2: y(v + k), stroke: '#777' });
    add(svg, 'text', { x: x0 - (v === 100 ? 3 : 6), y: y(v) + (v === 100 ? 4 : 3), class: 'scale-num' }, v);
  }
  values.forEach((v, i) => {
    const x = Math.round(start + gap * i) - 1, id = `bar${index}${i}`;
    add(svg, 'line', { x1: x, y1: y0, x2: x, y2: y1 + 3, stroke: '#999', 'stroke-dasharray': '3 2' });
    const gradient = add(svg, 'linearGradient', { id, x1: 0, y1: 0, x2: 0, y2: 1 });
    add(gradient, 'stop', { offset: 0, 'stop-color': colors[i][0] });
    add(gradient, 'stop', { offset: 1, 'stop-color': colors[i][1] });
    add(svg, 'rect', { x: x - 12, y: y(v), width: 24, height: y1 - y(v), fill: `url(#${id})`, stroke: '#333' });
    add(svg, 'text', { x, y: y1 - 6, class: 'strong' }, v);
    add(svg, 'text', { x, y: 99, class: 'strong' }, [1, 3, 4, 2][i]);
  });
  add(svg, 'path', { d: `M${x0} ${y1}V${y0}H${x1}`, fill: 'none', stroke: '#333' });
  add(svg, 'path', { d: `M${x1} ${y0}V${y1}H${x0}`, fill: 'none', stroke: '#222', 'stroke-width': 2 });
});
```
